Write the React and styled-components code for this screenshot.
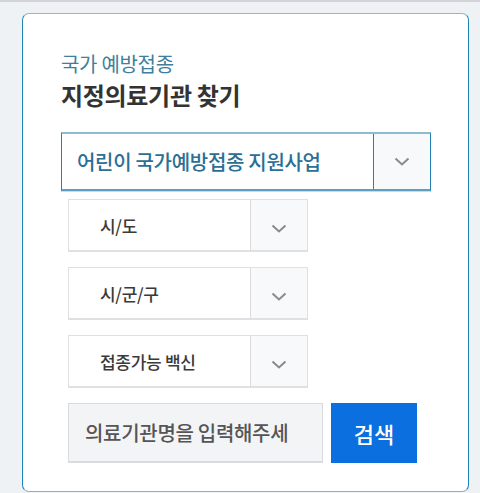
import React from 'react'
import styled, { createGlobalStyle } from 'styled-components'

const GlobalStyle = createGlobalStyle`
  html, body {
    margin: 0;
    padding: 0;
    background: #eef2f5;
  }
  body {
    font-family: 'Noto Sans CJK KR', 'Noto Sans', sans-serif;
  }
`

const Page = styled.div`
  border-top: 2px solid #d0d4d8;
  padding: 11px 0 0 22px;
  min-height: 480px;
`

const Card = styled.section`
  box-sizing: border-box;
  width: 447px;
  background: #fff;
  border: 1px solid;
  border-color: #86bcd6 #1c84b8 #7fb7d2 #1c84b8;
  border-radius: 7px;
  padding: 38px 0 28px 38px;
  display: flex;
  flex-direction: column;
`

const Eyebrow = styled.p`
  margin: 0;
  font-size: 20px;
  line-height: 24px;
  letter-spacing: -0.3px;
  color: #3d7f9c;
`

const Title = styled.h2`
  margin: 4px 0 0;
  font-size: 24px;
  line-height: 30px;
  font-weight: 700;
  letter-spacing: -0.3px;
  color: #333;
`

const MainSelect = styled.div`
  box-sizing: border-box;
  margin-top: 22px;
  width: 370px;
  height: 59px;
  display: flex;
  border-top: 2px solid #8fbbd1;
  border-left: 1px solid #2280b3;
  border-right: 1px solid #2280b3;
  border-bottom: 2px solid #5e9ec0;
  box-shadow: 0 1px 0 #cfd9df;
`

const MainLabel = styled.div`
  flex: 1;
  display: flex;
  align-items: center;
  padding-left: 15px;
  font-size: 20px;
  font-weight: 500;
  letter-spacing: -0.3px;
  color: #2b6f95;
`

const ArrowCell = styled.div`
  width: ${p => p.$w}px;
  display: flex;
  align-items: center;
  justify-content: center;
  padding-top: ${p => p.$drop || 0}px;
  box-sizing: border-box;
  background: #f8f9fb;
  border-left: 1px solid ${p => p.$line};
`

const SubList = styled.div`
  display: flex;
  flex-direction: column;
  gap: 15px;
  margin: 8px 0 0 7px;
`

const SubSelect = styled.div`
  box-sizing: border-box;
  width: 240px;
  height: 53px;
  display: flex;
  border: 1px solid #e0e0e3;
  border-bottom-width: 2px;
`

const SubLabel = styled.div`
  flex: 1;
  display: flex;
  align-items: center;
  padding-left: 31px;
  font-size: 17px;
  font-weight: 500;
  letter-spacing: -0.3px;
  color: #3a3a3a;
`

const SearchRow = styled.div`
  display: flex;
  gap: 8px;
  margin: 15px 0 0 7px;
`

const SearchInput = styled.input`
  box-sizing: border-box;
  width: 255px;
  height: 60px;
  padding: 0 0 0 16px;
  background: #f3f4f6;
  border: 1px solid #dadbde;
  border-bottom-width: 2px;
  font-family: inherit;
  font-size: 20px;
  font-weight: 500;
  letter-spacing: -0.3px;
  color: #444;
  outline: none;
  &::placeholder {
    color: #555;
  }
`

const SearchButton = styled.button`
  width: 86px;
  height: 60px;
  border: 0;
  background: #0b6fe0;
  color: #fff;
  font-family: inherit;
  font-size: 22px;
  font-weight: 500;
  cursor: pointer;
`

const Chevron = () => (
  <svg width="16" height="9" viewBox="0 0 16 9" fill="none">
    <polyline points="1.5,1.5 8,7.5 14.5,1.5" stroke="#8a8a8a" strokeWidth="2" />
  </svg>
)

const subs = ['시/도', '시/군/구', '접종가능 백신']

export default function App() {
  return (
    <>
      <GlobalStyle />
      <Page>
        <Card>
          <Eyebrow>국가 예방접종</Eyebrow>
          <Title>지정의료기관 찾기</Title>
          <MainSelect>
            <MainLabel>어린이 국가예방접종 지원사업</MainLabel>
            <ArrowCell $w={57} $line="#2280b3">
              <Chevron />
            </ArrowCell>
          </MainSelect>
          <SubList>
            {subs.map(s => (
              <SubSelect key={s}>
                <SubLabel>{s}</SubLabel>
                <ArrowCell $w={57} $line="#dcdcdf" $drop={6}>
                  <Chevron />
                </ArrowCell>
              </SubSelect>
            ))}
          </SubList>
          <SearchRow>
            <SearchInput placeholder="의료기관명을 입력해주세" />
            <SearchButton>검색</SearchButton>
          </SearchRow>
        </Card>
      </Page>
    </>
  )
}
